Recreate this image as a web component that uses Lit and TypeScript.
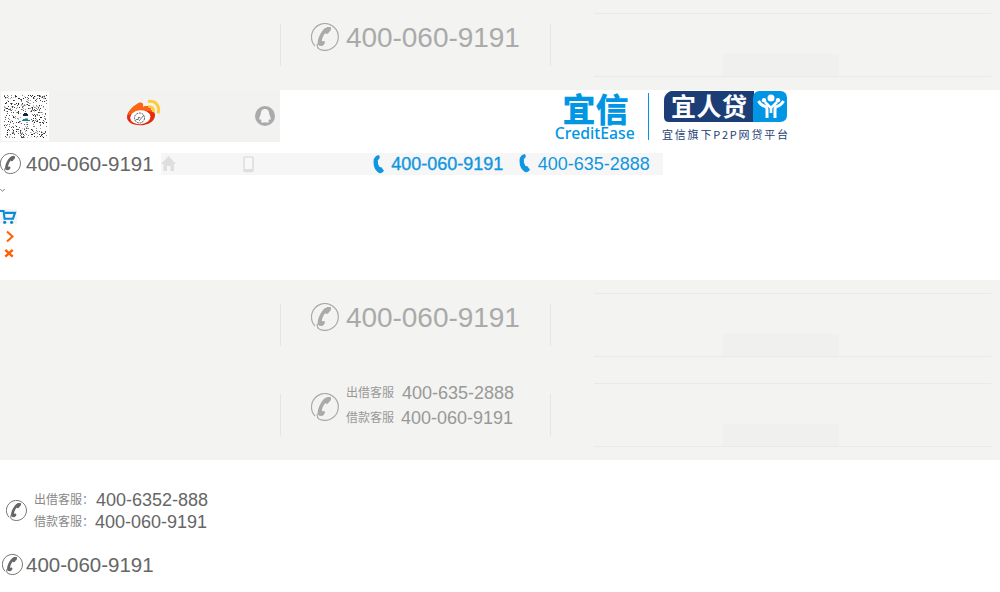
import { LitElement, html, css, svg } from "lit";
import { customElement, property } from "lit/decorators.js";

@customElement("phone-icon")
class PhoneIcon extends LitElement {
  static styles = css`
    :host { display: block; flex: none; }
    svg { display: block; width: 100%; height: 100%; }
  `;
  render() {
    return html`<svg viewBox="0 0 28 28" fill="none">
      <path d="M6.3 20.5 C6 23 6.2 24.8 8 26 A13.4 13.4 0 1 0 4 23" stroke="currentColor" stroke-width="1.2"/>
      <path fill="currentColor" d="M19.8 4.2 C17.8 3.6 15.2 3.9 13.4 5.6 C10.2 8.8 7.2 14.4 6.8 18.6 C6.6 20.8 7 22.2 8.2 22.8 L10.8 22.9 C12.6 22.4 13.8 20.8 13.9 19.2 C13.8 18.3 13.2 17.9 12.2 18 L10.9 18.6 C10.6 16 12.2 12.4 14.3 9.9 L15.2 11 C16.6 11.2 17.8 10 18.2 8.8 C19.6 8.4 20.6 5.6 19.8 4.2 Z"/>
    </svg>`;
  }
}

@customElement("footer-band")
class FooterBand extends LitElement {
  @property({ type: Boolean }) double = false;
  static styles = css`
    :host { display: flex; height: 90px; background: #f3f3f1; font-family: "Liberation Sans", "Noto Sans CJK SC", sans-serif; }
    .contact { box-sizing: border-box; width: 271px; height: 42px; margin: 24px 0 0 280px; border-left: 1px solid #e4e4e3; border-right: 1px solid #e4e4e3; display: flex; }
    phone-icon { width: 28px; height: 28px; color: #aaa; margin: -1px 0 0 30px; }
    .num { font-size: 28px; line-height: 28px; color: #aaa; margin-left: 7px; white-space: nowrap; letter-spacing: -0.05px; }
    .lines { margin: -13px 0 0 7px; display: grid; grid-template-columns: 56px auto; grid-auto-rows: 24.5px; line-height: 24px; color: #999; white-space: nowrap; align-content: start; }
    .lab { font-size: 12px; line-height: 24px; }
    .n { font-size: 18px; }
    .n.shift { margin-left: -1px; }
    .panel { box-sizing: border-box; width: 397px; height: 64px; margin: 13px 0 0 43px; border-top: 1px solid #e9e9e8; border-bottom: 1px solid #e9e9e8; display: flex; align-items: flex-end; }
    .tab { width: 116px; height: 22px; margin-left: 129px; background: #f0f0ef; border-radius: 2px 2px 0 0; }
  `;
  render() {
    return html`<div class="contact"><phone-icon></phone-icon>${this.double
      ? html`<div class="lines"><span class="lab">出借客服</span><span class="n">400-635-2888</span><span class="lab">借款客服</span><span class="n shift">400-060-9191</span></div>`
      : html`<span class="num">400-060-9191</span>`}</div>
      <div class="panel"><div class="tab"></div></div>`;
  }
}

function qrDots() {
  let seed = 917;
  const next = () => (seed = (seed * 16807) % 2147483647) / 2147483647;
  const out = [];
  for (let y = 0; y < 43; y++) {
    for (let x = 0; x < 43; x++) {
      const v = next();
      const shade = Math.floor(20 + next() * 180);
      if (v < 0.2 && !(x > 16 && x < 27 && y > 16 && y < 28)) {
        out.push(svg`<rect x=${x} y=${y} width="1" height="1" fill=${`rgb(${shade},${shade},${shade})`}/>`);
      }
    }
  }
  return out;
}

@customElement("app-root")
class AppRoot extends LitElement {
  static styles = css`
    :host { display: block; width: 1000px; height: 592px; overflow: hidden; background: #fff; font-family: "Liberation Sans", "Noto Sans CJK SC", sans-serif; }
    svg { display: block; flex: none; overflow: visible; }
    .row { display: flex; align-items: flex-start; white-space: nowrap; }
    .brands { height: 52px; }
    .social { flex: none; width: 280px; height: 52px; background: #f2f2f1; display: flex; }
    .qr { width: 48px; height: 50px; margin: 1px 0 0 1px; background: #fff; }
    .qr svg { margin: 4px 0 0 3px; }
    .weibo { margin: 9px 0 0 77px; }
    .qq { margin: 16px 0 0 93px; }
    .credit { width: 80px; margin: 1px 0 0 276px; }
    .rule { width: 1px; height: 47px; margin: 3px 0 0 12px; background: #0096e4; }
    .yrd { margin-left: 14px; }
    .cn { font-family: "Noto Sans CJK SC", sans-serif; }
    .latin { font-family: "Noto Sans", "Open Sans", sans-serif; }
    .links { margin-top: 11px; height: 22px; }
    .dark { color: #666; }
    .small { width: 21px; height: 21px; }
    .mid { font-size: 20.5px; line-height: 22px; }
    .strip { width: 502px; height: 22px; margin-left: 7px; background: #f6f6f6; display: flex; color: #0f96e0; }
    .n18 { font-size: 18px; line-height: 22px; }
    .strong { -webkit-text-stroke: 0.35px currentColor; }
    .glyphs { height: 105px; display: flex; flex-direction: column; }
    .service { height: 44px; margin-top: 29px; }
    .pair { display: grid; grid-template-columns: 62px auto; grid-auto-rows: 22px; color: #666; }
    .lab { font-size: 12px; line-height: 22px; color: #888; }
    .last { margin-top: 21px; height: 22px; }
  `;
  render() {
    return html`
      <footer-band></footer-band>
      <div class="row brands">
        <div class="social">
          <div class="qr"><svg width="43" height="43" viewBox="0 0 43 43" shape-rendering="crispEdges">${qrDots()}
            <path d="M20 18h3v1h1v2h-5v-2h1z" fill="#124"/><path d="M19 24h5v1h2v1h-8v-1h1z" fill="#08b"/><path d="M21 23h3v1h-3zM22 27h2v1h-2z" fill="#e96"/></svg></div>
          <svg class="weibo" width="36" height="30" viewBox="0 0 36 30">
            <path d="M12 5 C15 3 17.5 4 17 8 C22 6 26 7 25 11 C29 12 30 16 28 20 C25 25 18 27 12 26 C5 26 1 22 1 18 C1 13 7 7 12 5Z" fill="#e62a12"/>
            <path d="M11 5 C15 2 18 4 17 8 C22 6 26 7 25 11 L27 13 L17 11 L6 15 L2 16 C3 12 7 7 11 5Z" fill="#ff6410"/>
            <ellipse cx="14.3" cy="18.2" rx="10.2" ry="7" fill="#fff" transform="rotate(-5 14.5 18.2)"/>
            <circle cx="13.5" cy="19" r="5" fill="none" stroke="#444" stroke-width=".9" stroke-dasharray="2 .8"/>
            <path d="M9.7 20.5h2.6v-2h2M13 22l5-6" stroke="#666" stroke-width=".9" fill="none"/>
            <path d="M22.2 7.8 C26 7 28.5 9.5 27.2 13.2" stroke="#ffcb38" stroke-width="2.6" fill="none"/>
            <path d="M22 2.6 C29 1 34.5 7 32 14.2" stroke="#ffcb38" stroke-width="3" fill="none"/>
          </svg>
          <svg class="qq" width="20" height="20" viewBox="0 0 20 20"><circle cx="10" cy="10" r="10" fill="#aaa"/>
            <path d="M10 3 C7 3 5.8 5.2 5.8 8 C5 10 3.9 11.8 4.5 14 L5.8 13.2 L6.5 14.8 L6 16.5 H9.4 L10 16 L10.6 16.5 H14 L13.5 14.8 L14.2 13.2 L15.5 14 C16.1 11.8 15 10 14.2 8 C14.2 5.2 13 3 10 3Z" fill="#f5f5f5"/></svg>
        </div>
        <svg class="credit" width="80" height="51" viewBox="0 0 80 51" fill="#0096e4">
          <text class="cn" x="6.5" y="30.7" font-size="33" font-weight="900" textLength="66">宜信</text>
          <text class="latin" x="-1.2" y="48" font-size="16" font-weight="500" textLength="80" lengthAdjust="spacingAndGlyphs">CreditEase</text>
        </svg>
        <div class="rule"></div>
        <svg class="yrd" width="128" height="52" viewBox="0 0 128 52">
          <path d="M91 1H8C3 3 1 6 1 11V27Q1 32 6 32H91Z" fill="#1b3e76"/>
          <path d="M96 1H118Q124 2 124 8V25Q124 32 117 32H90V8Q90 2 96 1Z" fill="#0096e4"/>
          <text class="cn" x="8" y="25.8" font-size="25" font-weight="700" fill="#fff" textLength="76">宜人贷</text>
          <g stroke="#fff" fill="none">
            <path d="M95.5 11 Q98 15.5 102.5 16.5 Q104 17 104 20 V28 M120.5 11 Q118 15.5 113.5 16.5 Q112 17 112 20 V28" stroke-width="3"/>
            <path d="M102 12 L108 18 L114 12 M108 17 V23" stroke-width="2.6"/>
          </g>
          <circle cx="108" cy="8" r="3.5" fill="#fff"/><circle cx="101" cy="10.2" r="2.2" fill="#fff"/><circle cx="115" cy="10.2" r="2.2" fill="#fff"/>
          <text class="cn" x="-1" y="49" font-size="11" font-weight="400" fill="#1b3e76" textLength="126">宜信旗下P2P网贷平台</text>
        </svg>
      </div>
      <div class="row links">
        <phone-icon class="small dark"></phone-icon><span class="mid dark" style="margin-left:5px">400-060-9191</span>
        <div class="strip">
          <svg width="16" height="22" viewBox="0 0 16 22"><path d="M7.5 3 L15 11 H13 V18 H9.5 V13 H6 V18 H2.5 V11 H0Z" fill="#dedede"/></svg>
          <svg width="12" height="22" viewBox="0 0 12 22" style="margin-left:66px"><rect x="1" y="4" width="9" height="14.4" rx="1" fill="#f8f8f8" stroke="#dedede" stroke-width="1.6"/><path d="M1 16h9v2H1z" fill="#dedede"/></svg>
          <svg width="14" height="22" viewBox="0 0 14 22" style="margin-left:117px"><path d="M4 3 L7 2 Q8.5 4 7.2 6 L5.8 7 Q5.5 11.5 7.5 14 L9.4 14.3 L12 17.8 Q10 21 7 20 Q1.5 16.5 1.5 9 Q1.5 5 4 3Z" fill="currentColor"/></svg>
          <span class="n18 strong" style="margin-left:5.5px">400-060-9191</span>
          <svg width="14" height="22" viewBox="0 0 14 22" style="margin-left:14.5px"><path transform="translate(0 -1)" d="M4 3 L7 2 Q8.5 4 7.2 6 L5.8 7 Q5.5 11.5 7.5 14 L9.4 14.3 L12 17.8 Q10 21 7 20 Q1.5 16.5 1.5 9 Q1.5 5 4 3Z" fill="currentColor"/></svg>
          <span class="n18" style="margin-left:6px">400-635-2888</span>
        </div>
      </div>
      <div class="glyphs">
        <svg width="6" height="34" viewBox="0 0 6 34"><path d="M.2 14 L2.5 16.4 L4.8 14" fill="none" stroke="#777" stroke-width=".9"/></svg>
        <svg width="17" height="15" viewBox="0 0 17 15"><path d="M0 0h17v15H0z" fill="#f5f5f5"/><path d="M0 2H3.6L4.5 9.7H13L15 3.9H5" fill="none" stroke="#078bd8" stroke-width="2.1"/><circle cx="4.7" cy="13.3" r="1.6" fill="#078bd8"/><circle cx="11.6" cy="13.3" r="1.6" fill="#078bd8"/></svg>
        <svg width="16" height="36" viewBox="0 0 16 36"><path d="M7 7.5 L12.5 12.5 L7 17.5" fill="none" stroke="#ff6000" stroke-width="2"/><path d="M5.3 25.8 L12.7 32.6 M12.7 25.8 L5.3 32.6" stroke="#ff6000" stroke-width="2.5"/></svg>
      </div>
      <footer-band></footer-band>
      <footer-band double></footer-band>
      <div class="row service">
        <phone-icon class="small dark" style="margin:11px 7px 0 6px"></phone-icon>
        <div class="pair"><span class="lab">出借客服：</span><span class="n18">400-6352-888</span><span class="lab">借款客服：</span><span class="n18" style="margin-left:-1px">400-060-9191</span></div>
      </div>
      <div class="row last"><phone-icon class="small dark" style="margin-left:2px"></phone-icon><span class="mid dark" style="margin-left:3px">400-060-9191</span></div>
    `;
  }
}
